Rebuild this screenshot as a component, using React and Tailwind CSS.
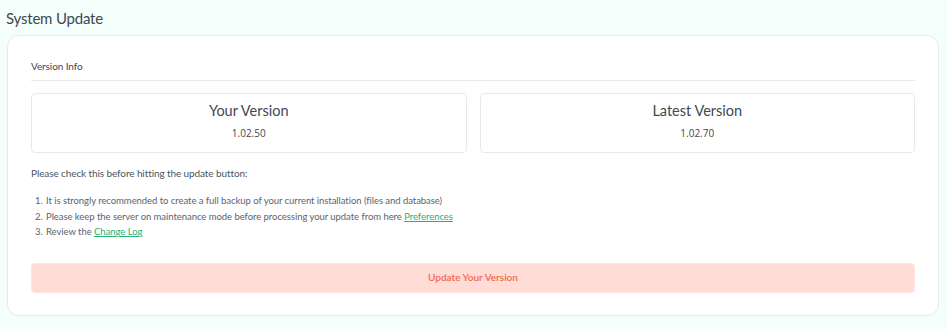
export default function App() {
  return (
    <div className="min-h-[329px] w-full bg-[#f4fefb] px-[6px] pt-[8px] pb-[12px] font-['Lato',sans-serif] text-[#4b5563]">
      <h1 className="text-[15px] leading-[20px] tracking-[-0.2px] text-[#3f4752]">System Update</h1>

      <div className="mt-[7px] mr-[2px] ml-[1px] rounded-[12px] border border-[#e3eaf0] bg-white px-[23px] pt-[24px] pb-[22px]">
        <div className="border-b border-[#e5e9f2] pb-[7px] text-[10px] leading-[13px] tracking-[-0.1px] text-[#3f4752]">
          Version Info
        </div>

        <div className="mt-[12px] grid grid-cols-2 gap-[13px]">
          <div className="flex h-[60px] flex-col items-center rounded-[4px] border border-[#e5e9f2] pt-[8px]">
            <div className="text-[14.5px] leading-[18px] text-[#3f4752]">Your Version</div>
            <div className="mt-[6px] font-['Open_Sans',sans-serif] text-[10px] leading-[14px] text-[#3f4752]">1.02.50</div>
          </div>
          <div className="flex h-[60px] flex-col items-center rounded-[4px] border border-[#e5e9f2] pt-[8px]">
            <div className="text-[14.5px] leading-[18px] text-[#3f4752]">Latest Version</div>
            <div className="mt-[6px] font-['Open_Sans',sans-serif] text-[10px] leading-[14px] text-[#3f4752]">1.02.70</div>
          </div>
        </div>

        <p className="mt-[13px] text-[10px] leading-[14px] tracking-[-0.1px] text-[#4b5563]">
          Please check this before hitting the update button:
        </p>

        <ol className="mt-[13px] list-decimal pl-[14px] text-[9.5px] leading-[15.5px] tracking-[-0.05px] text-[#5b6470]">
          <li className="pl-[1px]">It is strongly recommended to create a full backup of your current installation (files and database)</li>
          <li className="pl-[1px]">
            Please keep the server on maintenance mode before processing your update from here{" "}
            <a href="#" className="text-[#23b07a] underline">Preferences</a>
          </li>
          <li className="pl-[1px]">
            Review the{" "}
            <a href="#" className="text-[#23b07a] underline">Change Log</a>
          </li>
        </ol>

        <button className="mt-[23px] flex h-[30px] w-full items-center justify-center rounded-[4px] border border-[#fde4df] bg-[#ffdcd6] text-[10px] font-semibold text-[#f26a52]">
          Update Your Version
        </button>
      </div>
    </div>
  );
}
